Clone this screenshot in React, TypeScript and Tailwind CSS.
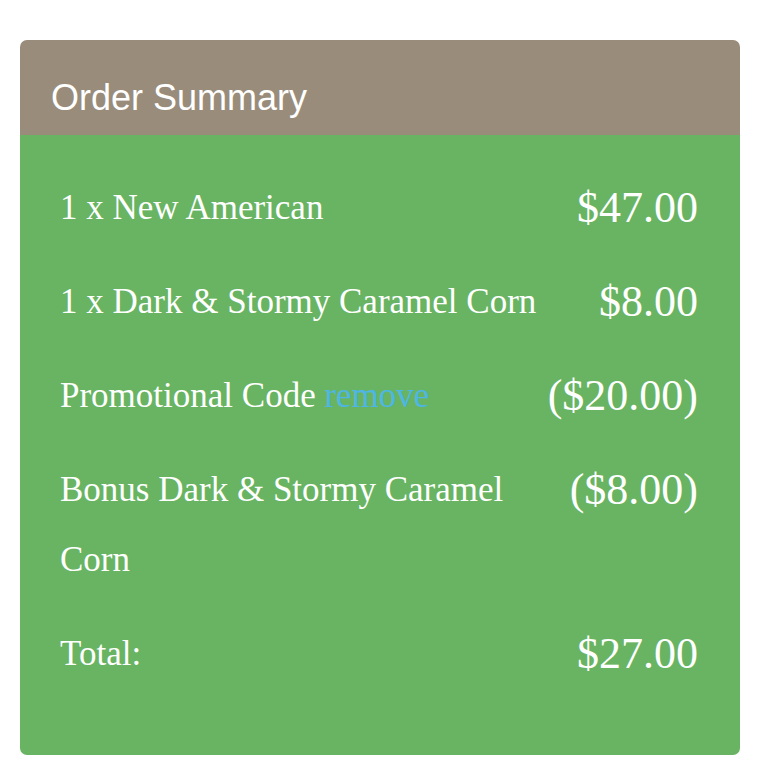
const lines = [
  { label: '1 x New American', price: '$47.00' },
  { label: '1 x Dark & Stormy Caramel Corn', price: '$8.00' },
  { label: 'Promotional Code', price: '($20.00)', remove: true },
  { label: 'Bonus Dark & Stormy Caramel Corn', price: '($8.00)' },
  { label: 'Total:', price: '$27.00' },
];

export default function App() {
  return (
    <div className="min-h-screen bg-white pt-[40px] pl-[20px]">
      <div className="w-[720px] overflow-hidden rounded-[7px]">
        <div className="h-[95px] bg-[#998c7b] px-[31px] pt-[37px]">
          <h2 className="font-['Liberation_Sans',Arial,sans-serif] text-[36px] leading-[42px] text-white">
            Order Summary
          </h2>
        </div>
        <div className="bg-[#68b462] pl-[40px] pr-[42px] pt-[38px] pb-[42px] font-['Liberation_Serif','Times_New_Roman',serif] text-white">
          {lines.map((l) => (
            <div key={l.label} className="mb-[24px] flex items-start justify-between">
              <div className="w-[490px] text-[35px] leading-[70px]">
                {l.label}
                {l.remove && <a href="#" className="text-[#4db6e4]"> remove</a>}
              </div>
              <div className="text-[44px] leading-[70px] whitespace-nowrap">{l.price}</div>
            </div>
          ))}
        </div>
      </div>
    </div>
  );
}
